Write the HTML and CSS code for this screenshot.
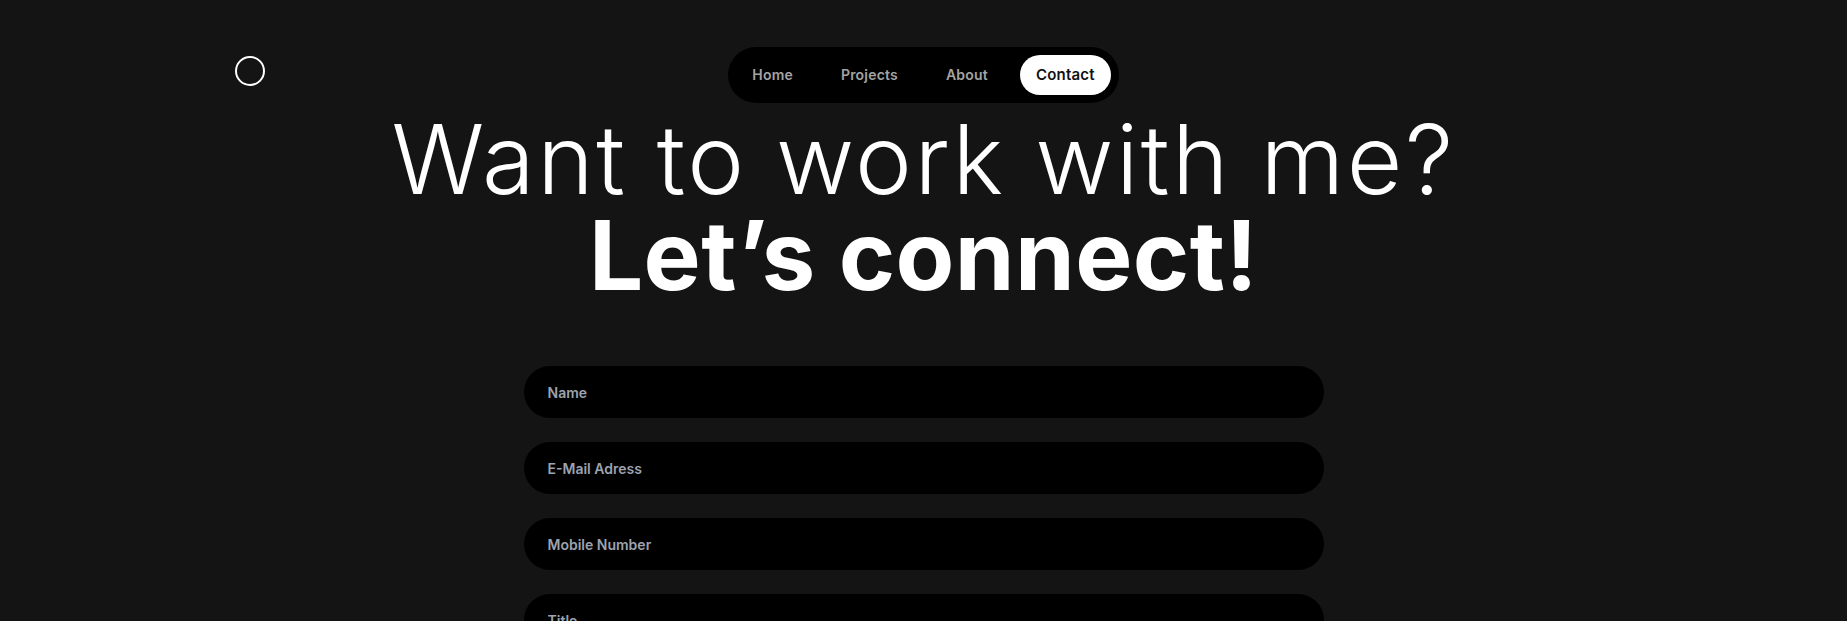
FILE: index.html
```html
<!DOCTYPE html>
<html lang="en">
<head>
<meta charset="utf-8">
<title>Contact</title>
<link rel="stylesheet" href="styles.css">
</head>
<body>
<div class="page">
  <header class="header">
    <a class="logo" href="#" aria-label="Home"></a>
    <nav class="nav">
      <a class="nav-link" href="#">Home</a>
      <a class="nav-link" href="#">Projects</a>
      <a class="nav-link" href="#">About</a>
      <a class="nav-link active" href="#">Contact</a>
    </nav>
    <div class="spacer"></div>
  </header>
  <main class="main">
    <h1 class="title">
      <span class="light">Want to work with me?</span>
      <span class="bold">Let’s connect!</span>
    </h1>
    <form class="form">
      <input class="field" type="text" placeholder="Name">
      <input class="field" type="email" placeholder="E-Mail Adress">
      <input class="field" type="tel" placeholder="Mobile Number">
      <input class="field" type="text" placeholder="Title">
    </form>
  </main>
</div>
</body>
</html>
```
FILE: styles.css
```css
* { box-sizing: border-box; }
html, body { margin: 0; padding: 0; }
body {
  background: #141414;
  color: #fff;
  font-family: Inter, "Liberation Sans", sans-serif;
  overflow: hidden;
}
.page {
  width: 1377px;
  margin: 0 auto;
}
.header {
  display: grid;
  grid-template-columns: 1fr auto 1fr;
  align-items: start;
  padding-top: 47px;
}
.logo {
  display: block;
  width: 30px;
  height: 30px;
  margin-top: 9px;
  border: 2px solid #fff;
  border-radius: 50%;
}
.nav {
  display: flex;
  gap: 16px;
  padding: 8px;
  background: #000;
  border-radius: 28px;
}
.nav-link {
  display: block;
  padding: 0 16px;
  height: 40px;
  line-height: 40px;
  border-radius: 20px;
  color: #a3a3a3;
  text-decoration: none;
  font-size: 14px;
  font-weight: 600;
  letter-spacing: 0.2px;
}
.nav-link.active {
  background: #fff;
  color: #111;
  font-size: 15px;
}
.main {
  display: flex;
  flex-direction: column;
  align-items: center;
}
.title {
  margin: 8px 0 0;
  text-align: center;
  font-size: 96px;
  line-height: 96px;
}
.title span { display: block; }
.light { font-weight: 300; letter-spacing: 2.5px; }
.bold { font-weight: 700; letter-spacing: 0.4px; }
.form {
  width: 800px;
  margin-top: 63px;
  display: flex;
  flex-direction: column;
  gap: 24px;
}
.field {
  display: block;
  width: 100%;
  height: 52px;
  padding: 0 24px;
  border: 0;
  border-radius: 26px;
  background: #000;
  color: #fff;
  font-family: Inter, "Liberation Sans", sans-serif;
  font-size: 14px;
  font-weight: 600;
  outline: none;
}
.field::placeholder { color: #9ca3af; }
```
